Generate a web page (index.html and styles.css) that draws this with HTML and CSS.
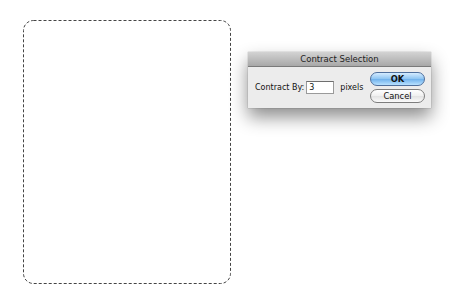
FILE: index.html
```html
<!DOCTYPE html>
<html>
<head>
<meta charset="utf-8">
<link rel="stylesheet" href="styles.css">
</head>
<body>
<div class="canvas">
  <svg class="marquee" width="210" height="266" viewBox="0 0 210 266">
    <rect x="1.5" y="1.5" width="207" height="263" rx="10" ry="10" fill="none" stroke="#444" stroke-width="1" stroke-dasharray="3 2"/>
  </svg>
  <div class="dialog">
    <div class="titlebar">Contract Selection</div>
    <div class="body">
      <div class="field">
        <span class="label">Contract By:</span>
        <span class="input">3</span>
        <span class="unit">pixels</span>
      </div>
      <div class="buttons">
        <div class="btn ok">OK</div>
        <div class="btn cancel">Cancel</div>
      </div>
    </div>
  </div>
</div>
</body>
</html>
```
FILE: styles.css
```css
html, body {
  margin: 0;
  padding: 0;
  background: #ffffff;
}
.canvas {
  display: flex;
  align-items: flex-start;
  padding: 19px 0 0 22px;
  font-family: "DejaVu Sans", "Liberation Sans", sans-serif;
}
.marquee {
  display: block;
  flex: none;
}
.dialog {
  margin: 33px 0 0 16px;
  width: 183px;
  background: #ececec;
  box-shadow: 0 9px 18px rgba(0,0,0,0.45), 0 0 1px rgba(0,0,0,0.4);
}
.titlebar {
  height: 14px;
  line-height: 15px;
  text-align: center;
  font-size: 8.5px;
  color: #222;
  background: linear-gradient(#d3d3d3, #a8a8a8);
  border-bottom: 1px solid #7a7a7a;
}
.body {
  display: flex;
  justify-content: space-between;
  padding: 5px 6px 6px 7px;
  height: 30px;
}
.field {
  display: flex;
  align-items: center;
  font-size: 8px;
  color: #111;
  margin-top: 1px;
}
.label {
  margin-right: 2px;
}
.input {
  display: inline-block;
  width: 24px;
  height: 11px;
  line-height: 11px;
  padding-left: 2px;
  background: #fff;
  border: 1px solid #9a9a9a;
  border-top-color: #6e6e6e;
  margin-right: 6px;
}
.buttons {
  display: flex;
  flex-direction: column;
  gap: 3px;
}
.btn {
  width: 53px;
  height: 12px;
  line-height: 12px;
  border-radius: 7px;
  text-align: center;
  font-size: 8.3px;
  color: #111;
}
.ok {
  background: linear-gradient(#d5ecff, #8cc4f2 50%, #6fb1ec 51%, #b8e1ff);
  border: 1px solid #4f6f9c;
  font-weight: bold;
}
.cancel {
  background: linear-gradient(#ffffff, #f0f0f0 50%, #e2e2e2 51%, #fbfbfb);
  border: 1px solid #7e7e7e;
}
```
